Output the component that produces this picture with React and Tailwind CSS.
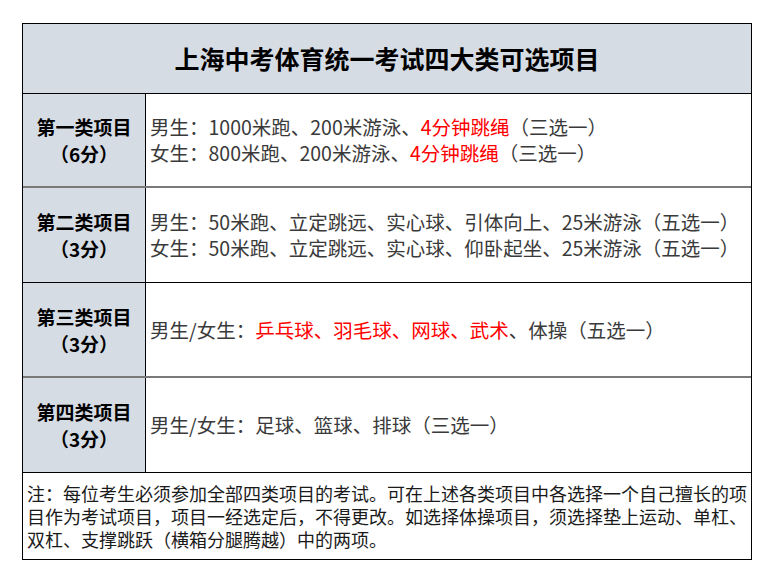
import React from "react";

const FONT = { fontFamily: '"Noto Sans CJK SC", "Noto Sans", sans-serif' };

const rows = [
  {
    title: "第一类项目",
    score: "（6分）",
    border: "border-b-2 border-[#7a7a7a]",
    height: "h-[94px]",
    lines: [
      [["男生：1000米跑、200米游泳、"], ["4分钟跳绳", true], ["（三选一）"]],
      [["女生：800米跑、200米游泳、"], ["4分钟跳绳", true], ["（三选一）"]],
    ],
  },
  {
    title: "第二类项目",
    score: "（3分）",
    border: "border-b border-black",
    height: "h-[95px]",
    lines: [
      [["男生：50米跑、立定跳远、实心球、引体向上、25米游泳（五选一）"]],
      [["女生：50米跑、立定跳远、实心球、仰卧起坐、25米游泳（五选一）"]],
    ],
  },
  {
    title: "第三类项目",
    score: "（3分）",
    border: "border-b-2 border-[#7a7a7a]",
    height: "h-[95px]",
    lines: [
      [["男生/女生："], ["乒乓球、羽毛球、网球、武术", true], ["、体操（五选一）"]],
    ],
  },
  {
    title: "第四类项目",
    score: "（3分）",
    border: "border-b border-black",
    height: "h-[95px]",
    lines: [[["男生/女生：足球、篮球、排球（三选一）"]]],
  },
];

export default function App() {
  return (
    <div className="w-[776px] h-[566px] bg-white pt-[23px] pl-[22px]" style={FONT}>
      <div className="w-[730px] border border-black">
        {/* Header */}
        <div className="h-[70px] bg-[#d6dce4] border-b border-black flex items-center justify-center">
          <h1 className="text-[25px] font-bold text-black leading-none">
            上海中考体育统一考试四大类可选项目
          </h1>
        </div>

        {rows.map((row) => (
          <div key={row.title} className={`flex ${row.height} ${row.border}`}>
            <div className="w-[123px] shrink-0 bg-[#d6dce4] border-r border-black flex flex-col items-center justify-center font-bold text-[19px] leading-[27px] text-black">
              <span>{row.title}</span>
              <span>{row.score}</span>
            </div>
            <div className="flex-1 flex flex-col justify-center pl-[4px] text-[19.5px] leading-[26px] text-[#3a3a3a] whitespace-nowrap">
              {row.lines.map((parts, i) => (
                <div key={i}>
                  {parts.map(([t, red], j) => (
                    <span key={j} className={red ? "text-[#ff0000]" : ""}>
                      {t}
                    </span>
                  ))}
                </div>
              ))}
            </div>
          </div>
        ))}

        {/* Note */}
        <div className="h-[86px] flex flex-col justify-center pl-[4px] text-[18px] leading-[23px] text-[#1a1a1a] whitespace-nowrap">
          <div>注：每位考生必须参加全部四类项目的考试。可在上述各类项目中各选择一个自己擅长的项</div>
          <div>目作为考试项目，项目一经选定后，不得更改。如选择体操项目，须选择垫上运动、单杠、</div>
          <div>双杠、支撑跳跃（横箱分腿腾越）中的两项。</div>
        </div>
      </div>
    </div>
  );
}
